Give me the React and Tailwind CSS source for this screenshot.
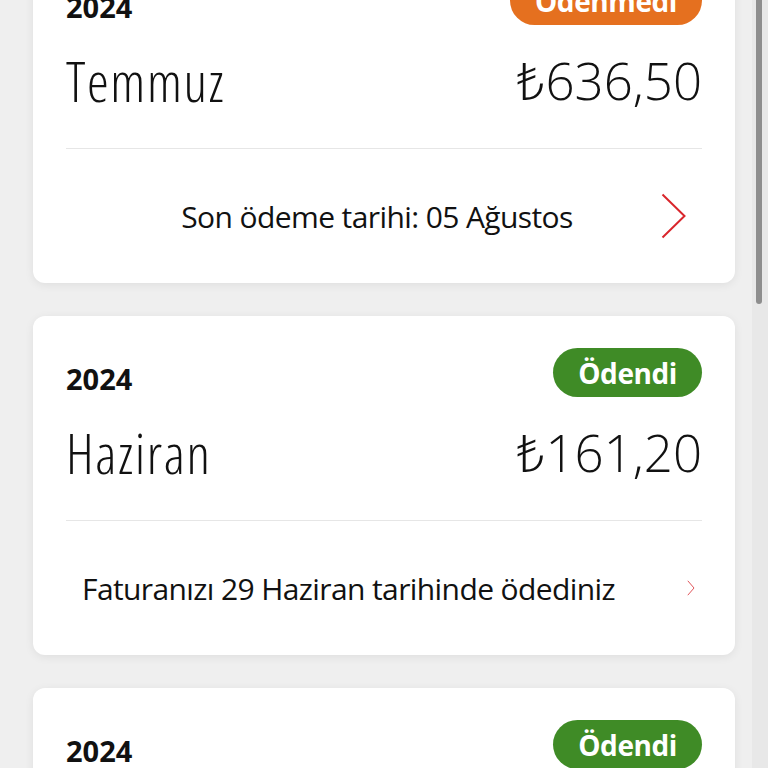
const font = "font-['Open_Sans','Noto_Sans',sans-serif]";

const bills = [
  { year: "2024", month: "Temmuz", amount: "₺636,50", paid: false, note: "Son ödeme tarihi: 05 Ağustos" },
  { year: "2024", month: "Haziran", amount: "₺161,20", paid: true, note: "Faturanızı 29 Haziran tarihinde ödediniz" },
  { year: "2024", month: "Mayıs", amount: "₺158,40", paid: true, note: "Faturanızı 28 Mayıs tarihinde ödediniz" },
];

function BigChevron() {
  return (
    <svg viewBox="0 0 25 46" className="w-[25px] h-[46px] shrink-0 -ml-[27px] mr-[16px]">
      <path d="M1.5 1.5 L23.5 23 L1.5 44.5" fill="none" stroke="#d9262c" strokeWidth="2" />
    </svg>
  );
}

function SmallChevron() {
  return (
    <svg viewBox="0 0 8 16" className="w-[8px] h-[16px] shrink-0 mr-[7px]">
      <path d="M0.8 0.8 L7 8 L0.8 15.2" fill="none" stroke="#e0565b" strokeWidth="1" />
    </svg>
  );
}

function BillCard({ bill }) {
  return (
    <div className="shrink-0 bg-white rounded-xl shadow-[0_2px_10px_rgba(0,0,0,0.07)] pt-[32px] px-[33px]">
      <div className="h-[49px] flex items-end justify-between">
        <span className="text-[29px] leading-[36px] font-bold text-[#111]">{bill.year}</span>
        <span
          className={
            "h-[49px] px-[25px] rounded-full flex items-center text-white text-[28px] tracking-[-0.4px] font-bold " +
            (bill.paid ? "bg-[#3f8b26]" : "bg-[#e5701f]")
          }
        >
          {bill.paid ? "Ödendi" : "Ödenmedi"}
        </span>
      </div>
      <div className="h-[123px] pb-[12px] flex items-center justify-between text-[#111] font-light">
        <span className="text-[55px] leading-none font-stretch-[75%] tracking-[1.6px]">{bill.month}</span>
        <span className="text-[51px] leading-none">{bill.amount}</span>
      </div>
      <div className="h-px bg-[#e6e6e6]" />
      <div className="h-[134px] flex items-center text-[#111] text-[30px] tracking-[-0.6px]">
        {bill.paid ? (
          <>
            <span className="flex-1 pl-[16px]">{bill.note}</span>
            <SmallChevron />
          </>
        ) : (
          <>
            <span className="flex-1 text-center">{bill.note}</span>
            <BigChevron />
          </>
        )}
      </div>
    </div>
  );
}

export default function App() {
  return (
    <div className={"h-[768px] w-full flex overflow-hidden bg-[#efefef] " + font}>
      <div className="flex-1 flex flex-col gap-[33px] pl-[33px] pr-[17px] -mt-[56px]">
        {bills.map((b) => (
          <BillCard key={b.month} bill={b} />
        ))}
      </div>
      <div className="w-[16px] shrink-0 bg-[#e8e8e8]">
        <div className="ml-[4px] w-[6px] h-[304px] rounded-b-full bg-[#8e8e8e]" />
      </div>
    </div>
  );
}
